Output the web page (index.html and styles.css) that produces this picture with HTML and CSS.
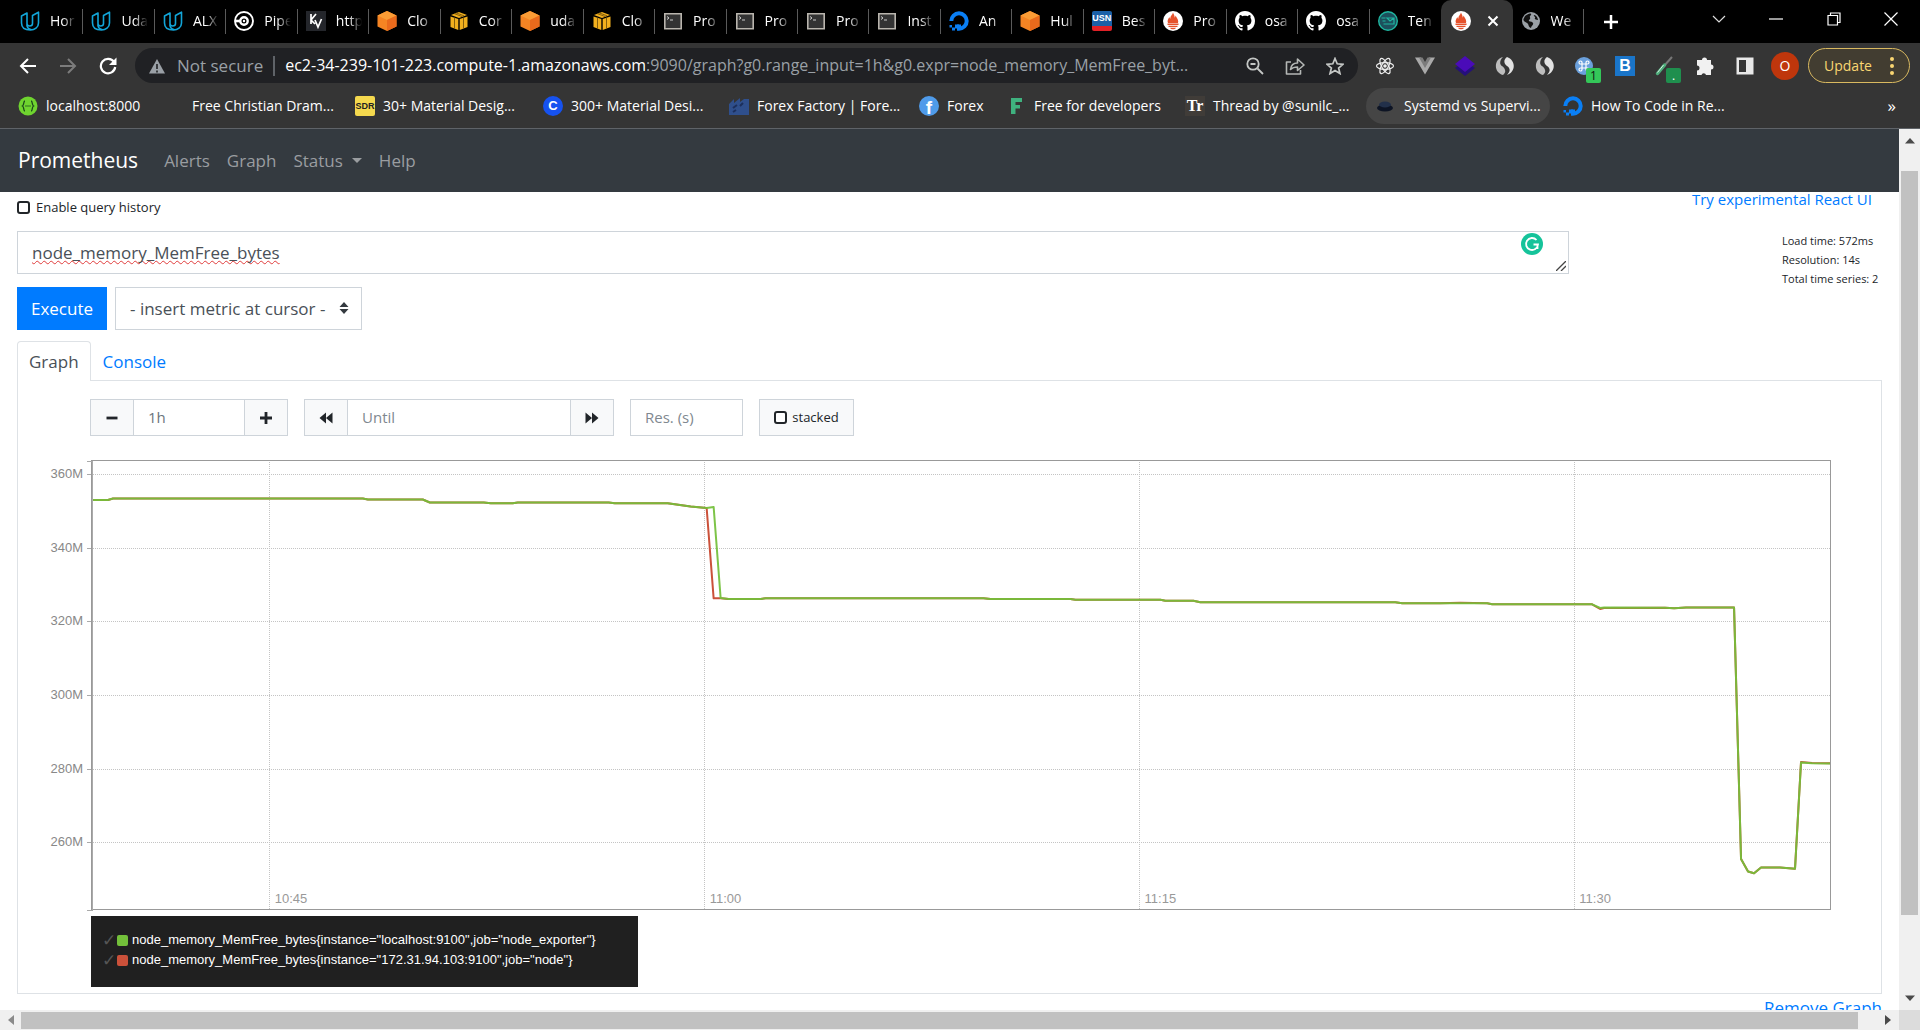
FILE: index.html
```html
<!DOCTYPE html>
<html lang="en">
<head>
<meta charset="utf-8">
<title>Prometheus Time Series Collection and Processing Server</title>
<link rel="stylesheet" href="styles.css">
</head>
<body>
<svg class="sprites" aria-hidden="true">
  <symbol id="udacity" viewBox="0 0 20 20"><path d="M1.500 5 7 2v10.500c0 1.500 1 2.500 2.700 2.500S12.500 14 12.500 12.500V4.500L18.500 1.200V12c0 4.500-4 7-8 7-5.500 0-9-2.500-9-7zM7 12.500c-.5 3 1.500 5.500 4.500 6.300" fill="none" stroke="#12a5d8" stroke-width="1.600" stroke-linejoin="round"/></symbol>
  <symbol id="circleci" viewBox="0 0 20 20"><circle cx="10" cy="10" r="9" fill="none" stroke="#fff" stroke-width="1.900"/><circle cx="10" cy="10" r="3.700" fill="none" stroke="#fff" stroke-width="2.400"/><circle cx="10" cy="10" r="1.200" fill="#fff"/><path d="M1 10h6" stroke="#fff" stroke-width="2.600"/></symbol>
  <symbol id="kv" viewBox="0 0 20 20"><path d="M0 0h20v20H0z" fill="#24262b"/><path d="M5 3v10M10 3 5 9l4 4M9 9l3 7 3.500-8" fill="none" stroke="#fff" stroke-width="1.700"/></symbol>
  <symbol id="cube" viewBox="0 0 20 20"><path d="m10 0 9.500 4.500v11L10 20 .5 15.500v-11z" fill="#f58423"/><path d="m10 0 9.500 4.500L10 9 .5 4.500z" fill="#fb9c35"/><path d="m10 9 9.500-4.500v11L10 20z" fill="#ea6a1c"/></symbol>
  <symbol id="aws" viewBox="0 0 20 20"><path d="m10 1 8 3-8 3-8-3zM1.500 5.500 9.300 8v11l-7.800-3zM18.500 5.500 10.700 8v11l7.800-3z" fill="#f2b01e"/><path d="m5 2.500 8 3M7 1.800l8 3M5.500 6.500v11M14.500 6.500v11" stroke="#6a4a08" stroke-width=".8"/></symbol>
  <symbol id="term" viewBox="0 0 20 20"><path d="M1.800 2.800h16.400v15H1.800z" fill="#333" stroke="#b9b5ae" stroke-width="1.600"/><path d="m4 5.500 2 1.500-2 1.500M7 9h3" fill="none" stroke="#ccc"/></symbol>
  <symbol id="ocean" viewBox="0 0 20 20"><path d="M2.300 10A7.700 7.700 0 1 1 10 17.700V13.500" fill="none" stroke="#0a7ff5" stroke-width="4"/><path d="M6 13.500h4v4H6zM3 16.500h3v3H3zM.5 14h2.500v2.500H.5z" fill="#0a7ff5"/></symbol>
  <symbol id="prom" viewBox="0 0 20 20"><circle cx="10" cy="10" r="10" fill="#fff"/><path d="M10 1.500c.5 2 2 3 1.500 5 1-.5 1-2 1-2 1.500 2.500 3.500 5 2.500 7.500H5c-1-2 0-4 1.500-6 0 1 .5 1.500 1 1.500C7 5 9.500 4 10 1.500zM4.500 12.500h11V14h-11zM5.500 14.800h9V16h-9zM7 16.700h6c-1 2-5 2-6 0z" fill="#e6522c"/></symbol>
  <symbol id="github" viewBox="0 0 16 16"><path fill="#fff" d="M8 0C3.580 0 0 3.580 0 8c0 3.540 2.290 6.530 5.470 7.590.4.070.55-.17.55-.38 0-.19-.01-.82-.01-1.490-2.010.37-2.530-.49-2.690-.94-.09-.23-.48-.94-.82-1.130-.28-.15-.68-.52-.01-.53.630-.01 1.080.58 1.230.82.720 1.210 1.870.87 2.330.66.070-.52.280-.87.510-1.070-1.780-.2-3.640-.89-3.640-3.950 0-.87.310-1.590.820-2.150-.08-.2-.36-1.020.080-2.120 0 0 .67-.21 2.200.82.640-.18 1.320-.27 2-.27s1.360.09 2 .27c1.530-1.040 2.200-.82 2.200-.82.440 1.100.160 1.920.080 2.120.510.56.820 1.270.820 2.150 0 3.070-1.870 3.750-3.650 3.950.290.25.540.73.540 1.480 0 1.070-.01 1.930-.01 2.200 0 .21.150.46.550.38A8 8 0 0 0 16 8c0-4.420-3.580-8-8-8z"/></symbol>
  <symbol id="mail" viewBox="0 0 20 20"><circle cx="10" cy="10" r="9.300" fill="#1d4f5c" stroke="#1fb6a0" stroke-width="1.400"/><path d="M3.500 7h4M4.500 10h3M5.500 13h10.500V7H9l3 3 4-3" fill="none" stroke="#1fb6a0" stroke-width="1.200"/></symbol>
  <symbol id="globe" viewBox="0 0 20 20"><circle cx="10" cy="10" r="9" fill="#9aa0a6"/><path d="M4 5c3-2 5-3 6-2s-2 2-1 3.500S7 9 8 10s3 0 4 2-2 3-2 5c-3-1-2-4-4-5S2 10 2.500 8zM13 4c2 0 4 3 4 5-2 0-4-1-3-2s-2-2-1-3z" fill="#111"/></symbol>
  <symbol id="react" viewBox="0 0 20 20"><g fill="none" stroke="#eee" stroke-width="1.200"><ellipse cx="10" cy="10" rx="8.500" ry="3.300"/><ellipse cx="10" cy="10" rx="8.500" ry="3.300" transform="rotate(60 10 10)"/><ellipse cx="10" cy="10" rx="8.500" ry="3.300" transform="rotate(120 10 10)"/></g><circle cx="10" cy="10" r="1.800" fill="#eee"/></symbol>
  <symbol id="vue" viewBox="0 0 20 20"><path d="M0 1.500h6l4 7 4-7h6L10 18.500z" fill="#aaa"/><path d="M4 1.500h3.500L10 6l2.500-4.500H16L10 12z" fill="#7c7c7c"/></symbol>
  <symbol id="layers" viewBox="0 0 20 20"><path d="m10 5 10 7-10 8-10-8z" fill="#25107c"/><path d="m10 0 10 8-10 8L0 8z" fill="#4a0bb8"/></symbol>
  <symbol id="swirl" viewBox="0 0 20 20"><path d="M8 1C-1 3-2 16 8 19c4-3 2-7-1-9s-2-6 1-9z" fill="#bdbdbd"/><path d="M12 1c9 3 9 15 0 18 4-4 3-7 0-9s-4-6 0-9z" fill="#e2e2e2"/></symbol>
</svg>

<header class="browser">
  <div class="titlebar">
    <nav class="tabs" aria-label="Open tabs">
      <div class="tab"><svg class="fav"><use href="#udacity"/></svg><span>Hor</span></div>
      <div class="tab"><svg class="fav"><use href="#udacity"/></svg><span>Uda</span></div>
      <div class="tab"><svg class="fav"><use href="#udacity"/></svg><span>ALX</span></div>
      <div class="tab"><svg class="fav"><use href="#circleci"/></svg><span>Pipe</span></div>
      <div class="tab"><svg class="fav"><use href="#kv"/></svg><span>http</span></div>
      <div class="tab"><svg class="fav"><use href="#cube"/></svg><span>Clo</span></div>
      <div class="tab"><svg class="fav"><use href="#aws"/></svg><span>Cor</span></div>
      <div class="tab"><svg class="fav"><use href="#cube"/></svg><span>uda</span></div>
      <div class="tab"><svg class="fav"><use href="#aws"/></svg><span>Clo</span></div>
      <div class="tab"><svg class="fav"><use href="#term"/></svg><span>Pro</span></div>
      <div class="tab"><svg class="fav"><use href="#term"/></svg><span>Pro</span></div>
      <div class="tab"><svg class="fav"><use href="#term"/></svg><span>Pro</span></div>
      <div class="tab"><svg class="fav"><use href="#term"/></svg><span>Inst</span></div>
      <div class="tab"><svg class="fav"><use href="#ocean"/></svg><span>An</span></div>
      <div class="tab"><svg class="fav"><use href="#cube"/></svg><span>Hul</span></div>
      <div class="tab"><i class="fav usn">USN</i><span>Bes</span></div>
      <div class="tab"><svg class="fav"><use href="#prom"/></svg><span>Pro</span></div>
      <div class="tab"><svg class="fav"><use href="#github"/></svg><span>osa</span></div>
      <div class="tab"><svg class="fav"><use href="#github"/></svg><span>osa</span></div>
      <div class="tab before"><svg class="fav"><use href="#mail"/></svg><span>Ten</span></div>
      <div class="tab active"><svg class="fav"><use href="#prom"/></svg><button class="close" aria-label="Close tab"><svg width="12" height="12" viewBox="0 0 12 12"><path d="m1.500 1.500 9 9m0-9-9 9" stroke="#fff" stroke-width="2"/></svg></button></div>
      <div class="tab"><svg class="fav"><use href="#globe"/></svg><span>We</span></div>
    </nav>
    <button class="newtab" aria-label="New tab"><svg width="16" height="16" viewBox="0 0 16 16"><path d="M8 1v14M1 8h14" stroke="#fff" stroke-width="2.500"/></svg></button>
    <div class="winctl">
      <button aria-label="Search tabs"><svg width="14" height="14" viewBox="0 0 14 14"><path d="m1 4 6 6 6-6" fill="none" stroke="#ddd" stroke-width="1.200"/></svg></button>
      <button aria-label="Minimize"><svg width="14" height="14" viewBox="0 0 14 14"><path d="M0 7h14" stroke="#fff" stroke-width="1.200"/></svg></button>
      <button aria-label="Restore"><svg width="14" height="14" viewBox="0 0 14 14"><path d="M1 3.500h9.500V13H1zM3.500 3.500V1H13v9.500h-2.500" fill="none" stroke="#fff" stroke-width="1.200"/></svg></button>
      <button aria-label="Close window"><svg width="14" height="14" viewBox="0 0 14 14"><path d="m.5.5 13 13m0-13-13 13" stroke="#fff" stroke-width="1.200"/></svg></button>
    </div>
  </div>

  <div class="toolbar">
    <div class="navbtns">
      <button aria-label="Back"><svg width="18" height="18" viewBox="0 0 18 18"><path d="M17 9H2m7-7L2 9l7 7" fill="none" stroke="#fff" stroke-width="2"/></svg></button>
      <button aria-label="Forward"><svg width="18" height="18" viewBox="0 0 18 18"><path d="M1 9h15M9 2l7 7-7 7" fill="none" stroke="#7c7c7c" stroke-width="2"/></svg></button>
      <button aria-label="Reload"><svg width="18" height="18" viewBox="0 0 18 18"><path d="M15 5A7.200 7.200 0 1 0 16.200 10" fill="none" stroke="#fff" stroke-width="2.200"/><path d="M17.500.5v7.500H10z" fill="#fff"/></svg></button>
    </div>
    <div class="omnibox">
      <svg width="16" height="16" viewBox="0 0 16 16"><path d="M8 1 0 15.500h16z" fill="#9aa0a6"/><path d="M8 6v5m0 1.500v2" stroke="#202124" stroke-width="1.600"/></svg>
      <span class="insecure">Not secure</span>
      <p class="url"><b>ec2-34-239-101-223.compute-1.amazonaws.com</b>:9090/graph?g0.range_input=1h&amp;g0.expr=node_memory_MemFree_byt...</p>
      <svg width="18" height="18" viewBox="0 0 18 18"><g fill="none" stroke="#c4c7c5" stroke-width="1.800"><circle cx="7" cy="7" r="5.700"/><path d="m11.500 11.500 5.500 5.500M4.500 7h5"/></g></svg>
      <svg width="20" height="18" viewBox="0 0 20 18"><path d="M6 5H1.500v12h14v-4M5.500 12.500C6 8 9 6 12.500 6V2l6.500 6-6.500 5.500V10c-3 0-5 .5-7 2.500z" fill="none" stroke="#b4b7b5" stroke-width="1.600" stroke-linejoin="round"/></svg>
      <svg width="18" height="18" viewBox="0 0 18 18"><path d="m9 1.500 2.200 5.300 5.800.5-4.400 3.700 1.400 5.600L9 13.600l-5 3 1.400-5.600L1 7.300l5.800-.5z" fill="none" stroke="#c4c7c5" stroke-width="1.700"/></svg>
    </div>
    <div class="exts">
      <svg class="ext"><use href="#react"/></svg>
      <svg class="ext"><use href="#vue"/></svg>
      <svg class="ext"><use href="#layers"/></svg>
      <svg class="ext"><use href="#swirl"/></svg>
      <svg class="ext"><use href="#swirl"/></svg>
      <span class="ext badged"><svg class="ext" viewBox="0 0 20 20"><circle cx="9" cy="10" r="9" fill="#6ba0dc"/><path d="M7 8h4v4H7zM7 8H5.500A1.500 1.500 0 1 1 7 6.500zM11 8V6.500A1.500 1.500 0 1 1 12.500 8zM11 12h1.500a1.500 1.500 0 1 1-1.500 1.500zM7 12v1.500A1.500 1.500 0 1 1 5.500 12z" fill="none" stroke="#fff" stroke-width="1.200"/></svg><i class="count">1</i></span>
      <i class="ext bsq">B</i>
      <span class="ext badged"><svg class="ext" viewBox="0 0 20 20"><path d="m17 1-8 9" stroke="#777" stroke-width="2"/><path d="m9.500 9-7 8.500" stroke="#4fae7c" stroke-width="3.500" stroke-linecap="round"/><path d="m8.500 9-6 7.500" stroke="#d8efe2" stroke-width="1"/></svg><i class="count dark">.</i></span>
      <svg class="ext" viewBox="0 0 20 20"><path d="M7 4a2.500 2.500 0 0 1 5 0h4v4.500a2.500 2.500 0 0 1 0 5V19h-5a2.300 2.300 0 0 0-4.500 0H2v-4.500a2.500 2.500 0 0 0 0-5V4z" fill="#f1f1f1"/></svg>
      <svg class="ext" viewBox="0 0 20 20"><path d="M1.500 1.500h17v17h-17z" fill="#e8e8e8"/><path d="M4 4h7v12H4z" fill="#353535"/></svg>
      <i class="avatar">O</i>
      <button class="update">Update <svg width="4" height="18" viewBox="0 0 4 18"><g fill="#f9d672"><circle cx="2" cy="2" r="2"/><circle cx="2" cy="9" r="2"/><circle cx="2" cy="16" r="2"/></g></svg></button>
    </div>
  </div>

  <nav class="bookmarks" aria-label="Bookmarks">
    <a href="#" class="bm w1"><svg class="fav" viewBox="0 0 20 20"><circle cx="10" cy="10" r="9.500" fill="#6fd42f"/><path d="M7 5c-2 0-.5 4-2.500 5C6.500 11 5 15 7 15M13 5c2 0 .5 4 2.500 5-2 1-.5 5-2.500 5M7.500 10h1m1 0h1m1 0h1" fill="none" stroke="#1c4a1c" stroke-width="1.300"/></svg>localhost:8000</a>
    <a href="#" class="bm w2">Free Christian Dram...</a>
    <a href="#" class="bm w3"><i class="fav sdr">SDR</i>30+ Material Desig...</a>
    <a href="#" class="bm w4"><i class="fav cc">C</i>300+ Material Desi...</a>
    <a href="#" class="bm w5"><svg class="fav" viewBox="0 0 20 20"><path d="M0 8 5 3v4l6-5v4l4-3h5v16H0z" fill="#2f4f8c"/><path d="m4 12 4-3m-4 7 3-2m4-4 3-3" stroke="#1c2f5c" stroke-width="2"/></svg>Forex Factory | Fore...</a>
    <a href="#" class="bm w6"><i class="fav ff">f</i>Forex</a>
    <a href="#" class="bm w7"><svg class="fav" viewBox="0 0 20 20"><path d="M5 2h11v4H9.500v3H14v3.500H9.500V18H5z" fill="#3fb27f"/></svg>Free for developers</a>
    <a href="#" class="bm w8"><i class="fav tr">Tr</i>Thread by @sunilc_...</a>
    <a href="#" class="bm hov"><svg class="fav" viewBox="0 0 20 20"><ellipse cx="9" cy="12" rx="8" ry="3.500" fill="#0d1424"/><ellipse cx="9" cy="8.500" rx="6" ry="3" fill="#22304a"/></svg>Systemd vs Supervi...</a>
    <a href="#" class="bm"><svg class="fav"><use href="#ocean"/></svg>How To Code in Re...</a>
    <button class="more" aria-label="More bookmarks">»</button>
  </nav>
</header>

<div class="viewport">
  <main class="page">
    <nav class="navbar">
      <a class="brand" href="#">Prometheus</a>
      <a href="#">Alerts</a>
      <a href="#">Graph</a>
      <a href="#" class="drop">Status</a>
      <a href="#">Help</a>
    </nav>
    <div class="content">
      <div class="top">
        <label class="check"><input type="checkbox">Enable query history</label>
        <a class="try" href="#">Try experimental React UI</a>
      </div>
      <div class="query">
        <div class="expr">
          <textarea aria-label="Expression" rows="1" spellcheck="false">node_memory_MemFree_bytes</textarea>
          <svg class="grammarly" width="22" height="22" viewBox="0 0 22 22"><circle cx="11" cy="11" r="11" fill="#15c39a"/><path d="M15.500 7A6 6 0 1 0 17 11.500h-4.500M16.500 12v4" fill="none" stroke="#fff" stroke-width="1.800"/></svg>
          <svg class="grip" width="10" height="10" viewBox="0 0 10 10"><path d="m0 10 10-10M5 10l5-5" stroke="#444" stroke-width="1.300"/></svg>
        </div>
        <div class="stats">Load time: 572ms<br>Resolution: 14s<br>Total time series: 2</div>
      </div>
      <div class="actions">
        <button class="execute">Execute</button>
        <div class="selectwrap">
          <select aria-label="Metric"><option>- insert metric at cursor -</option></select>
          <svg width="10" height="12" viewBox="0 0 10 12"><path d="M5 0l4.500 5h-9zM5 12l4.500-5h-9z" fill="#343a40"/></svg>
        </div>
      </div>
      <div class="viewtabs"><a class="on" href="#">Graph</a><a href="#">Console</a></div>
      <section class="panel">
        <div class="controls">
          <div class="group range">
            <button aria-label="Shrink range"><svg width="12" height="12" viewBox="0 0 12 12"><path d="M.5 6h11" stroke="#212529" stroke-width="2.800"/></svg></button>
            <input aria-label="Range" value="1h">
            <button aria-label="Grow range"><svg width="12" height="12" viewBox="0 0 12 12"><path d="M0 6h12M6 0v12" stroke="#212529" stroke-width="2.800"/></svg></button>
          </div>
          <div class="group until">
            <button aria-label="Rewind"><svg width="14" height="12" viewBox="0 0 14 12"><path d="M7 .5v11L.5 6zM13.500.5v11L7 6z" fill="#212529"/></svg></button>
            <input aria-label="Until" placeholder="Until">
            <button aria-label="Fast forward"><svg width="14" height="12" viewBox="0 0 14 12"><path d="M7 .5v11L13.500 6zM.5.5v11L7 6z" fill="#212529"/></svg></button>
          </div>
          <input class="res" aria-label="Resolution" placeholder="Res. (s)">
          <label class="check stacked"><input type="checkbox">stacked</label>
        </div>
        <svg class="chart" role="img" aria-label="Free memory over the last hour">
          <g class="grid">
            <line x1="0" x2="100%" y1="14" y2="14"/><line x1="0" x2="100%" y1="88" y2="88"/><line x1="0" x2="100%" y1="161" y2="161"/><line x1="0" x2="100%" y1="235" y2="235"/><line x1="0" x2="100%" y1="309" y2="309"/><line x1="0" x2="100%" y1="382" y2="382"/>
            <line x1="10.280%" x2="10.280%" y1="0" y2="449"/><line x1="35.290%" x2="35.290%" y1="0" y2="449"/><line x1="60.300%" x2="60.300%" y1="0" y2="449"/><line x1="85.300%" x2="85.300%" y1="0" y2="449"/>
          </g>
          <svg width="100%" height="450" viewBox="90 460 1740 450" preserveAspectRatio="none">
            <polyline class="series red" points="90,500 107,500 112,498.500 362,498.500 367,499.500 422,499.500 429,502.500 483,502.500 490,503.300 512,503.300 517,502.500 608,502.500 614,503.300 667,503.300 690,506.500 706,508 713,598.300 720,598.300 728,599 760,599 765,598.300 983,598.300 990,599 1070,599 1075,599.700 1160,599.700 1165,600.700 1193,600.700 1200,602.300 1395,602.300 1402,603.300 1440,603.300 1460,602.800 1487,603.300 1492,604.300 1592,604.300 1600,609 1604,608 1665,607.700 1674,608.300 1686,607.500 1734,607.500 1741,859 1748,871.500 1754,873.300 1761,867.500 1780,867.500 1795,868.700 1801,762 1812,763 1830,763.300"/>
            <polyline class="series green" points="90,500 107,500 112,498.500 362,498.500 367,499.500 422,499.500 429,502.500 483,502.500 490,503.300 512,503.300 517,502.500 608,502.500 614,503.300 667,503.300 690,506.500 706,508 713,507 720,598 728,599 760,599 765,598.300 983,598.300 990,599 1070,599 1075,599.700 1160,599.700 1165,600.700 1193,600.700 1200,602.300 1395,602.300 1402,603.300 1487,603.300 1492,604.300 1592,604.300 1600,608 1604,607.500 1665,607.700 1674,608.300 1686,607.500 1734,607.500 1741,859 1748,871.500 1754,873.300 1761,867.500 1780,867.500 1795,868.700 1801,762.500 1812,763.300 1830,763.500"/>
          </svg>
          <rect class="frame" x="0" y="0" width="100%" height="449"/>
          <path class="axis" d="M-4 1H1V450H-4M-4 14H0M-4 88H0M-4 161H0M-4 235H0M-4 309H0M-4 382H0"/>
          <g class="ylab"><text x="-8" y="18">360M</text><text x="-8" y="92">340M</text><text x="-8" y="165">320M</text><text x="-8" y="239">300M</text><text x="-8" y="313">280M</text><text x="-8" y="386">260M</text></g>
          <g class="xlab"><text x="10.280%" y="443" dx="5">10:45</text><text x="35.290%" y="443" dx="5">11:00</text><text x="60.300%" y="443" dx="5">11:15</text><text x="85.300%" y="443" dx="5">11:30</text></g>
        </svg>
        <ul class="legend">
          <li><span class="tick">✓</span><i class="sw g"></i>node_memory_MemFree_bytes{instance="localhost:9100",job="node_exporter"}</li>
          <li><span class="tick">✓</span><i class="sw r"></i>node_memory_MemFree_bytes{instance="172.31.94.103:9100",job="node"}</li>
        </ul>
      </section>
      <a class="remove" href="#">Remove Graph</a>
    </div>
  </main>
  <div class="vbar"><svg width="10" height="6" viewBox="0 0 10 6"><path d="M0 5.500h10L5 0z" fill="#4a4a4a"/></svg><div class="vthumb"></div><svg width="10" height="6" viewBox="0 0 10 6"><path d="M0 .5h10L5 6z" fill="#4a4a4a"/></svg></div>
  <div class="hbar"><svg width="6" height="10" viewBox="0 0 6 10"><path d="M6 0v10L0 5z" fill="#8a8a8a"/></svg><div class="hthumb"></div><svg width="6" height="10" viewBox="0 0 6 10"><path d="M0 0v10l6-5z" fill="#4a4a4a"/></svg></div>
  <div class="corner"></div>
</div>
</body>
</html>
```
FILE: styles.css
```css
* { box-sizing: border-box; }
body {
  margin: 0;
  height: 100vh;
  display: flex;
  flex-direction: column;
  overflow: hidden;
  background: #fff;
  color: #212529;
  font: 17px/27px "Open Sans", "Noto Sans", sans-serif;
}
button, input, select, textarea { font: inherit; color: inherit; margin: 0; border-radius: 0; }
button { border: 0; padding: 0; background: none; display: flex; align-items: center; justify-content: center; }
a { color: #007bff; text-decoration: none; }
svg { flex: none; }
i { font-style: normal; }
.sprites { position: absolute; width: 0; height: 0; }

/* browser chrome */
.browser { flex: none; background: #353535; color: #fff; font-size: 14px; line-height: 20px; border-bottom: 1px solid #5f6368; }
.titlebar { display: flex; height: 43px; background: #000; padding-left: 12px; }
.tabs { flex: 1; display: flex; min-width: 0; }
.tab { position: relative; flex: 1 1 0; min-width: 0; display: flex; align-items: center; gap: 10px; padding: 0 2px 2px 8px; }
.tab::after { content: ""; position: absolute; right: 0; top: 9px; height: 25px; width: 1px; background: #5a5a5a; }
.tab span { flex: 1; min-width: 0; white-space: nowrap; mask-image: linear-gradient(to right, #000 40%, transparent 84%); }
.tab.before::after, .tab.active::after { display: none; }
.tab.active { background: #353535; border-radius: 10px 10px 0 0; gap: 16px; }
.tab.active .fav { margin-left: 2px; }
.fav { width: 20px; height: 20px; flex: none; }
.usn { background: linear-gradient(#1a60a8 75%, #e02127 75%); border-radius: 2px; font: bold 9px/15px "Liberation Sans", sans-serif; text-align: center; }
.newtab { width: 54px; }
.winctl { width: 282px; display: flex; justify-content: space-between; padding: 0 22px 6px 74px; }

.toolbar { display: flex; align-items: center; height: 45px; }
.navbtns { width: 135px; display: flex; gap: 22px; padding-left: 19px; }
.omnibox { flex: 1; min-width: 0; height: 35px; display: flex; align-items: center; gap: 21px; padding: 0 14px; border-radius: 18px; background: #202124; color: #9aa0a6; font-size: 17px; }
.insecure { margin-left: -9px; padding-right: 10px; line-height: 20px; border-right: 2px solid #5f6368; }
.url { flex: 1; min-width: 0; margin: 0 0 0 -11px; white-space: nowrap; overflow: hidden; font-size: 16px; line-height: 27px; }
.url b { font-weight: 400; color: #fff; }
.exts { width: 562px; display: flex; align-items: center; gap: 20px; padding-left: 17px; }
.ext { width: 20px; height: 20px; flex: none; }
.badged { position: relative; }
.count { position: absolute; left: 11px; top: 12px; width: 15px; height: 15px; border-radius: 2px; background: #34c759; color: #111; font-size: 12px; line-height: 15px; text-align: center; }
.count.dark { background: #1f8f4e; color: #fff; }
.bsq { background: #1a75c9; font: bold 16px/20px "Liberation Sans", sans-serif; text-align: center; }
.avatar { width: 28px; height: 28px; border-radius: 50%; background: #bf360c; text-align: center; line-height: 28px; margin-left: -4px; }
.update { width: 102px; height: 35px; gap: 18px; margin-left: -11px; border: 1px solid #d9b960; border-radius: 18px; background: #423d31; color: #f9d672; font-size: 14px; }

.bookmarks { display: flex; align-items: center; height: 40px; padding: 0 24px 4px 8px; }
.bm { color: #fff; display: flex; align-items: center; gap: 8px; height: 36px; padding: 0 10px; white-space: nowrap; }
.w1 { width: 174px; } .w2 { width: 163px; } .w3 { width: 188px; } .w4 { width: 186px; }
.w5 { width: 190px; } .w6 { width: 87px; } .w7 { width: 179px; } .w8 { width: 191px; }
.hov { width: 184px; margin-right: 3px; background: #454545; border-radius: 18px; }
.more { margin-left: auto; font-size: 17px; }
.sdr { background: #f5d94e; color: #222; border-radius: 2px; font: bold 9px/20px "Liberation Sans", sans-serif; text-align: center; }
.cc { background: #1652f0; border-radius: 50%; font: bold 13px/20px "Liberation Sans", sans-serif; text-align: center; }
.ff { background: #4f9bea; border-radius: 50%; font: bold 19px/24px "Liberation Sans", sans-serif; text-align: center; overflow: hidden; }
.tr { background: #403c38; font: bold 16px/20px "Liberation Serif", serif; text-align: center; }

/* scrolling viewport */
.viewport { flex: 1; min-height: 0; display: grid; grid-template: minmax(0, 1fr) 20px / minmax(0, 1fr) 21px; }
.page { overflow: hidden; }
.vbar, .hbar { background: #f0f0f0; display: flex; align-items: center; }
.vbar { flex-direction: column; padding: 9px 0; }
.vthumb { width: 17px; flex: 0 1 744px; margin: 27px 0 auto; background: #c1c1c1; }
.hbar { padding: 0 8px; }
.hthumb { height: 17px; flex: 1; margin: 0 27px 0 7px; background: #c1c1c1; }
.corner { background: #dcdcdc; }

/* Prometheus */
.navbar { display: flex; align-items: center; gap: 17px; height: 63px; padding: 0 18px; background: #343a40; }
.navbar a { color: #9a9da0; }
.navbar .brand { color: #fff; font-size: 21px; margin-right: 9px; }
.drop::after { content: ""; display: inline-block; margin-left: 9px; vertical-align: 4px; border: 5px solid transparent; border-top-color: currentColor; border-bottom: 0; }
.content { padding: 0 17px; }
.top { display: flex; justify-content: space-between; height: 39px; padding-right: 10px; }
.check { display: flex; align-items: center; gap: 6px; font-size: 13px; }
.check input { appearance: none; width: 13px; height: 13px; border: 2px solid #212529; border-radius: 3px; background: #fff; }
.top .check { height: 30px; }
.try { line-height: 15px; font-size: 15px; }
.query { display: flex; justify-content: space-between; height: 56px; }
.expr { position: relative; flex: 0 1 1552px; height: 43px; }
textarea { display: block; width: 100%; height: 43px; padding: 7px 14px; border: 1px solid #ced4da; background: #fff; color: #495057; resize: none; outline: 0; overflow: hidden; text-decoration: underline wavy #e03c3c 1px; text-decoration-skip-ink: none; }
.grammarly { position: absolute; right: 26px; top: 2px; }
.grip { position: absolute; right: 3px; bottom: 3px; }
.stats { width: 100px; white-space: nowrap; font-size: 11px; line-height: 19px; }
.actions { display: flex; gap: 8px; height: 54px; }
.execute { width: 90px; height: 43px; background: #007bff; color: #fff; }
.selectwrap { position: relative; width: 247px; height: 43px; }
select { appearance: none; width: 100%; height: 100%; padding: 0 14px; border: 1px solid #ced4da; background: #fff; color: #495057; }
.selectwrap svg { position: absolute; right: 13px; top: 15px; pointer-events: none; }
.viewtabs { display: flex; position: relative; height: 40px; margin-bottom: -1px; }
.viewtabs a { padding: 6px 11px; border: 1px solid transparent; }
.viewtabs .on { color: #495057; background: #fff; border-color: #dee2e6; border-bottom: 0; border-radius: 4px 4px 0 0; }
.panel { border: 1px solid #dee2e6; padding: 18px 51px 6px 73px; }
.controls { display: flex; gap: 16px; height: 61px; margin-left: -1px; }
.group { display: flex; height: 37px; }
.range { width: 198px; } .until { width: 310px; }
.group button { width: 44px; border: 1px solid #ced4da; background: #f8f9fa; }
.controls input:not([type]) { flex: 1; min-width: 0; height: 37px; padding: 0 14px 2px; border: 1px solid #ced4da; background: #fff; color: #6c757d; font-size: 15px; outline: 0; }
.controls input::placeholder { color: #808890; }
.group input:not([type]) { border-left: 0; border-right: 0; }
.controls input.res { flex: 0 0 113px; }
.stacked { height: 37px; width: 95px; justify-content: center; border: 1px solid #ced4da; background: #f8f9fa; gap: 5px; }
.chart { display: block; width: 100%; height: 450px; overflow: visible; font: 13px "Liberation Sans", sans-serif; }
.grid line { stroke: #c4c4c4; stroke-dasharray: 1 1; shape-rendering: crispEdges; }
.series { fill: none; stroke-width: 2; vector-effect: non-scaling-stroke; stroke-linejoin: round; }
.red { stroke: #cb513a; }
.green { stroke: #73c03a; stroke-opacity: .93; }
.frame { fill: none; stroke: #999; shape-rendering: crispEdges; }
.axis { fill: none; stroke: #aaa; shape-rendering: crispEdges; }
.ylab text { text-anchor: end; fill: #888; }
.xlab text { fill: #999; }
.legend { list-style: none; width: 547px; height: 71px; margin: 6px 0 0; padding: 14px 11px; background: #202020; color: #fff; font: 13px/20px "Liberation Sans", sans-serif; }
.legend li { display: flex; align-items: center; white-space: nowrap; }
.tick { width: 15px; color: #555; font: 17px/20px "DejaVu Sans", sans-serif; }
.sw { width: 11px; height: 11px; margin-right: 4px; border-radius: 2px; }
.g { background: #73c03a; } .r { background: #cb513a; }
.remove { display: block; text-align: right; }
```
